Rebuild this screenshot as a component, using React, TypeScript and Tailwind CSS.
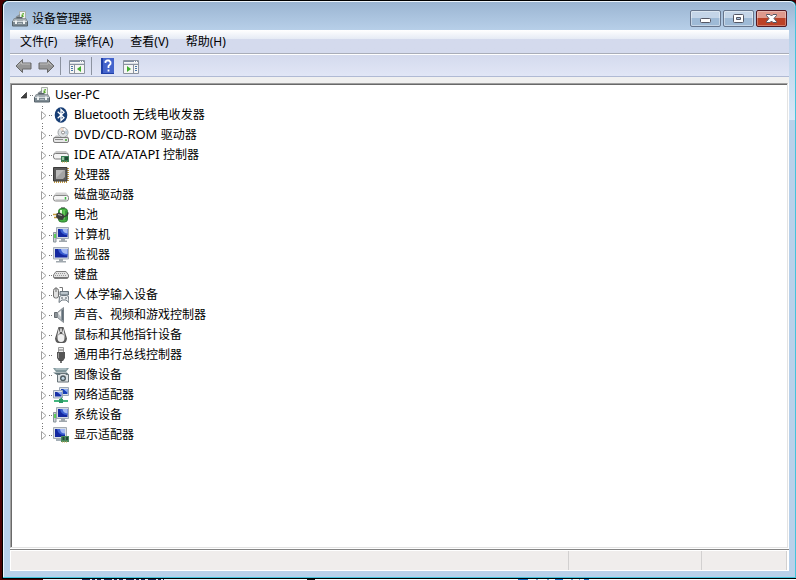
import type { ReactNode } from 'react';

type IDevice = {
  code?: string;
  name: string;
  icon: ReactNode;
};

type IIconProps = {
  children: ReactNode;
};

const Icon = (props: IIconProps) => (
  <svg className="size-4 shrink-0" viewBox="0 0 16 16" aria-hidden="true">
    {props.children}
  </svg>
);

const ManagerIcon = () => (
  <Icon>
    <path d="M7.500 .5h6v8h-6z" fill="#f1f4f1" stroke="#a9afa9" />
    <path d="M9.500 6V4q0-2 2.500-2v4z" fill="#5aa832" />
    <path d="M10.500 3.500h1v2" stroke="#c9e9ae" fill="none" />
    <path d="M3 8l1-2.500L8 3v5z" fill="#8b9398" />
    <path d="M4.500 6h6v2h-6z" fill="#59636a" />
    <path d="M2 7.500h12l1.500 3H.5z" fill="#a5adb2" stroke="#727c83" strokeWidth=".6" />
    <path d="M.5 10.500h15V15H.5z" fill="#7e8b93" stroke="#56626a" />
    <path d="M1 10.500h14" stroke="#d3dadd" />
    <path d="M3 9.500h2V13H3zM11 9.500h2V13h-2z" fill="#eff2f3" />
    <path d="M6 12.500h4" stroke="#b5bec3" />
  </Icon>
);

const BluetoothIcon = () => (
  <Icon>
    <ellipse cx="8" cy="8" rx="6.300" ry="7.800" fill="#173e75" />
    <path d="M4.700 4.700l6.300 6-3 2.800v-11l3 2.800-6.300 6" fill="none" stroke="#fff" strokeWidth="1.300" />
  </Icon>
);

const DiscIcon = () => (
  <Icon>
    <circle cx="10" cy="5.500" r="5" fill="#dfe2e4" stroke="#9fa3a6" />
    <path d="M10 5.500L7 1.500l3-.8z" fill="#f6dccb" />
    <path d="M10 5.500l4.500-2v4z" fill="#b9c9d6" />
    <path d="M10 5.500l1-4.500 2 1z" fill="#fff" />
    <circle cx="10" cy="5.500" r="1.500" fill="#fff" stroke="#8b8b8b" />
    <path d="M3 8.500h2l2 1.500h6l1-1.500 2 2.500H0z" fill="#c4c4c4" />
    <rect x=".5" y="10.500" width="15" height="5" rx="1.500" fill="#e6e6e6" stroke="#7c7c7c" />
    <path d="M2 12.500h8" stroke="#8b8b8b" />
    <path d="M12 13h2" stroke="#45a035" strokeWidth="1.500" />
  </Icon>
);

const ControllerIcon = () => (
  <Icon>
    <path d="M3 4h10l3 3H0z" fill="#c9c9c9" />
    <rect x=".5" y="6.500" width="15" height="5.500" rx="2" fill="#f4f4f4" stroke="#7d7d7d" />
    <path d="M8 9h8v6H8z" fill="#3a7d55" />
    <path d="M9 10h2v3H9z" fill="#98c3a2" />
    <path d="M12 10h3v3h-3z" fill="#1f4a34" />
    <path d="M9 15h6" stroke="#c9a53c" strokeDasharray="1 1" />
  </Icon>
);

const ProcessorIcon = () => (
  <Icon>
    <path d="M1 15h14M15 1v14" stroke="#c39a3f" strokeWidth="2" strokeDasharray="1 1" />
    <path d="M.5 .5h13.500V14H.5z" fill="#5a5a5a" stroke="#3b3b3b" />
    <path d="M3 3h9v7l-2 2H3z" fill="#a4a4a4" />
    <path d="M3 3h8l-8 8z" fill="#bcbcbc" />
  </Icon>
);

const DiskIcon = () => (
  <Icon>
    <path d="M3 5.500h10l3 4H0z" fill="#d4d4d4" />
    <rect x=".5" y="8.500" width="15" height="5.500" rx="2" fill="#f6f6f6" stroke="#868686" />
    <path d="M2.500 13h11" stroke="#b5b5b5" />
    <path d="M12.500 10v2.500" stroke="#39b642" strokeWidth="1.500" />
  </Icon>
);

const BatteryIcon = () => (
  <Icon>
    <path d="M8 0h4v2H8z" fill="#8a8f8a" />
    <rect x="5.500" y="1.500" width="9" height="13.500" rx="3" fill="#46b143" stroke="#2c7c31" />
    <path d="M8 3v5" stroke="#e3fbd9" strokeWidth="2" />
    <path d="M11 3v9" stroke="#7ed36c" />
    <path d="M13 4v9" stroke="#247a2d" />
    <path d="M0 7.500h5M1 10.500h4" stroke="#c79d3e" strokeWidth="1.300" />
    <path d="M3.500 6.500l3-1 4 2 1 2.500-2 3-4-.5-2.500-2.500z" fill="#3d3d3d" />
    <path d="M5 7.500l4 1" stroke="#b0b0b0" />
    <path d="M10.500 9.500q4 0 4.500-4" fill="none" stroke="#3a3a3a" strokeWidth="1.500" />
  </Icon>
);

const ComputerIcon = () => (
  <Icon>
    <path d="M3.500 .5h12v11h-12z" fill="#d4dae1" stroke="#a1a9b4" />
    <path d="M5 2h9.500v8H5z" fill="#1428a0" />
    <path d="M7 2h7.500v6Q8 8 7 2z" fill="#3b5fd2" />
    <path d="M9.500 2h5v4.500Q10 6 9.500 2z" fill="#a3b9f3" />
    <path d="M8 12h4v1.500h2v1.500H6v-1.500h2z" fill="#a0a8ae" />
    <path d="M.5 5.500h2.500v9.500H.5z" fill="#ccd2d5" stroke="#89949b" />
    <path d="M2 7v4" stroke="#3ed536" strokeWidth="1.500" />
  </Icon>
);

const ScreenIcon = () => (
  <Icon>
    <path d="M.5 .5h15v11.500H.5z" fill="#d5dce4" stroke="#a7afb9" />
    <path d="M2 2h12.500v8.500H2z" fill="#1428a0" />
    <path d="M5 2h9.500v6.500Q6 8.500 5 2z" fill="#3b5fd2" />
    <path d="M8 2h6.500v5Q8.500 7 8 2z" fill="#a3b9f3" />
    <path d="M6 12h4v2h3v1.500H3V14h3z" fill="#a0a8ae" />
  </Icon>
);

const KeyboardIcon = () => (
  <Icon>
    <path d="M3 4.500h10l2.500 3.500v2l-1 1.500h-13L.5 10V8z" fill="#e4e4e4" stroke="#808080" />
    <path d="M3 6.500h10M2 8.500h12" stroke="#999" strokeDasharray="1 1" />
    <path d="M1 10.500h14" stroke="#777" />
  </Icon>
);

const InputIcon = () => (
  <Icon>
    <path d="M3 3V0" stroke="#777" />
    <rect x=".5" y="1.500" width="5" height="9.500" rx="2" fill="#e0e0e0" stroke="#6f6f6f" />
    <path d="M3 2v3" stroke="#6f6f6f" />
    <path d="M6.500 .5h3v5" fill="none" stroke="#777" />
    <path d="M7 4.500h8.500V8H7z" fill="#a9b5bd" stroke="#68747c" />
    <path d="M8.500 6h6" stroke="#f3f5f6" strokeDasharray="1 1" />
    <path d="M6 15.500l.5-6L8.500 8.500h5l2 1 .5 6-3-2.500h-4z" fill="#e9ecee" stroke="#6c777f" />
    <path d="M8 11h2M13 10v2" stroke="#535d65" />
  </Icon>
);

const SpeakerIcon = () => (
  <Icon>
    <path d="M1.500 5.500h3v5h-3z" fill="#8b9297" stroke="#656b70" />
    <path d="M4.500 5.500l6-5v15l-6-5z" fill="#bcc2c6" stroke="#858b90" />
    <path d="M9.500 2.500v11" stroke="#5f6c76" strokeWidth="2" />
    <path d="M5 6l3-2v6z" fill="#f2f2f2" />
  </Icon>
);

const MouseIcon = () => (
  <Icon>
    <path d="M5.500 0h5l1.500 5 2 6.500q-.5 4-3 4.500H5q-2.500-.5-3-4.500L4 5z" fill="#5a5a5a" />
    <path d="M5.500 1.500L7 6l-2 2-1.500 4L5 5zM10.500 1.500L9 6l2 2 1.500 4L11 5z" fill="#e2e2e2" />
    <ellipse cx="8" cy="11" rx="3.500" ry="4" fill="#efefef" />
    <path d="M8 1.500V5" stroke="#f0f0f0" strokeWidth="1.500" />
  </Icon>
);

const UsbIcon = () => (
  <Icon>
    <path d="M5.500 .5h5v5h-5z" fill="#eee" stroke="#999" />
    <path d="M7 2v2M9 2v2" stroke="#777" />
    <path d="M4 5h8v6l-2 3H6l-2-3z" fill="#555" />
    <path d="M5.500 6v5" stroke="#999" />
    <path d="M8 13v3" stroke="#444" strokeWidth="1.500" />
  </Icon>
);

const ImagingIcon = () => (
  <Icon>
    <path d="M0 1h16l-3 4H3z" fill="#82989d" />
    <path d="M2.500 2h11" stroke="#d0dde0" />
    <path d="M0 5.500h14L16 8H4z" fill="#5c7278" />
    <path d="M5 7.500h2l1-1h4l1 1h2.500V15h-11V7.500z" fill="#dde2e4" stroke="#687378" />
    <circle cx="10" cy="11.300" r="3" fill="#4f5c62" />
    <circle cx="10" cy="11.300" r="1.500" fill="#c2d7e3" />
  </Icon>
);

const NetworkIcon = () => (
  <Icon>
    <path d="M6.500 .5h9v8h-9z" fill="#dce1e8" stroke="#9aa7b6" />
    <path d="M8 2h6.500v5H8z" fill="#183eb6" />
    <path d="M10 2h4.500v3.500z" fill="#8eaef4" />
    <path d="M.5 3.500h9V11h-9z" fill="#dce1e8" stroke="#9aa7b6" />
    <path d="M2 5h6.500v4.500H2z" fill="#1730a6" />
    <path d="M4 5h4.500v3.500z" fill="#8eaef4" />
    <path d="M1 14h14" stroke="#42b47e" strokeWidth="2" />
    <path d="M6 12h4v4H6zM7.500 10.500h1.500V13H7.500z" fill="#2d9c66" />
  </Icon>
);

const DisplayIcon = () => (
  <Icon>
    <path d="M.5 .5h13v11H.5z" fill="#d9dfe5" stroke="#a4abb2" />
    <path d="M2 2h10v8H2z" fill="#1428a0" />
    <path d="M4 2h8v6Q5 8 4 2z" fill="#3b5fd2" />
    <path d="M7 2h5v4.500Q7.500 6.500 7 2z" fill="#a3b9f3" />
    <path d="M3 12h5v2H3z" fill="#a5afb7" />
    <path d="M8 9h8v6H8z" fill="#4a8a5e" />
    <path d="M9.500 10h2v3h-2zM13 10h2v3h-2z" fill="#23483a" />
    <path d="M9 15h6" stroke="#caad52" strokeDasharray="1 1" />
  </Icon>
);

const devices: IDevice[] = [
  { name: 'Bluetooth 无线电收发器', icon: <BluetoothIcon /> },
  { code: 'DVD/CD-ROM', name: '驱动器', icon: <DiscIcon /> },
  { code: 'IDE ATA/ATAPI', name: '控制器', icon: <ControllerIcon /> },
  { name: '处理器', icon: <ProcessorIcon /> },
  { name: '磁盘驱动器', icon: <DiskIcon /> },
  { name: '电池', icon: <BatteryIcon /> },
  { name: '计算机', icon: <ComputerIcon /> },
  { name: '监视器', icon: <ScreenIcon /> },
  { name: '键盘', icon: <KeyboardIcon /> },
  { name: '人体学输入设备', icon: <InputIcon /> },
  { name: '声音、视频和游戏控制器', icon: <SpeakerIcon /> },
  { name: '鼠标和其他指针设备', icon: <MouseIcon /> },
  { name: '通用串行总线控制器', icon: <UsbIcon /> },
  { name: '图像设备', icon: <ImagingIcon /> },
  { name: '网络适配器', icon: <NetworkIcon /> },
  { name: '系统设备', icon: <ComputerIcon /> },
  { name: '显示适配器', icon: <DisplayIcon /> },
];

const menus = ['文件(F)', '操作(A)', '查看(V)', '帮助(H)'];

const ArrowIcon = (props: { forward?: boolean }) => (
  <svg className="h-4 w-[17px]" viewBox="0 0 17 16" aria-hidden="true">
    <path
      d={
        props.forward
          ? 'M16 8L9.500 1.500V5H1v6h8.500v3.500z'
          : 'M1 8l6.500-6.500V5H16v6H7.500v3.500z'
      }
      fill="#969696"
      stroke="#686868"
    />
    <path d={props.forward ? 'M2 6h8V4l3.500 3.500' : 'M15 6H6.500V4L3 7.500'} fill="none" stroke="#bdbdbd" />
  </svg>
);

const PaneIcon = (props: { right?: boolean }) => (
  <svg className="h-[14px] w-4" viewBox="0 0 16 14" aria-hidden="true">
    <path d="M.5 .5h15v13H.5z" fill="#f6f6f4" stroke="#8b929e" />
    <path d="M1 1.500h14" stroke="#7f8da3" />
    <path d="M11 1.500h1M13 1.500h1" stroke="#fff" />
    <path d="M1 3.500h14" stroke="#d9dee6" />
    <path d="M1 4.500h14" stroke="#8b929e" />
    {props.right ? (
      <>
        <path d="M10.500 5v8" stroke="#8b929e" />
        <path d="M12 6.500h2M12 8.500h2M12 10.500h2" stroke="#4875a8" />
        <path d="M4 6v6l4-3z" fill="#3fae2e" />
      </>
    ) : (
      <>
        <path d="M5.500 5v8" stroke="#8b929e" />
        <path d="M2 6.500h2M2 8.500h2M2 10.500h2" stroke="#4875a8" />
        <path d="M12 6v6L8 9z" fill="#3fae2e" />
      </>
    )}
  </svg>
);

const HelpIcon = () => (
  <svg className="h-4 w-[13px]" viewBox="0 0 13 16" aria-hidden="true">
    <path d="M0 0h13v16H0z" fill="#2040a8" />
    <path d="M2 0h11v15H2z" fill="#4464cc" />
    <path d="M4.500 5V3.500L6 2.500h2l1.500 1.500v2L7.500 8v2M7.500 11.500v2" fill="none" stroke="#fff" strokeWidth="1.800" />
  </svg>
);

const TitleBar = () => (
  <header className="flex h-7 shrink-0 items-center justify-between pr-2 pl-2">
    <div className="flex items-center gap-1 pt-1.5">
      <ManagerIcon />
      <h1>设备管理器</h1>
    </div>
    <div className="flex gap-0.5 pt-1">
      <button
        type="button"
        aria-label="最小化"
        className="flex h-[17px] w-[31px] items-center justify-center rounded-xs border border-[#66758c] bg-linear-to-b from-[#c4d5e8] from-50% to-[#9ebad6] to-50% pt-1 inset-ring inset-ring-white/40"
      >
        <svg className="h-[5px] w-[11px]" viewBox="0 0 11 5" aria-hidden="true">
          <rect x=".5" y=".5" width="10" height="4" rx="1" fill="#fff" stroke="#545764" />
        </svg>
      </button>
      <button
        type="button"
        aria-label="最大化"
        className="flex h-[17px] w-[31px] items-center justify-center rounded-xs border border-[#66758c] bg-linear-to-b from-[#c4d5e8] from-50% to-[#9ebad6] to-50% inset-ring inset-ring-white/40"
      >
        <svg className="h-[9px] w-[11px]" viewBox="0 0 11 9" aria-hidden="true">
          <rect x=".5" y=".5" width="10" height="8" rx="1" fill="#fff" stroke="#545764" />
          <path d="M3.500 3.500h4v2h-4z" fill="#a9c2df" stroke="#545764" />
        </svg>
      </button>
      <button
        type="button"
        aria-label="关闭"
        className="flex h-[17px] w-[31px] items-center justify-center rounded-xs border border-[#541a24] bg-linear-to-b from-[#df9a8d] from-50% to-[#bc4227] to-50% inset-ring inset-ring-white/30"
      >
        <svg className="h-[9px] w-[11px]" viewBox="0 0 11 9" aria-hidden="true">
          <path d="M.5 .5h3.500l1.500 1.500L7 .5h3.500v1L8 4.500l2.500 3v1H7L5.500 7 4 8.500H.5v-1l2.500-3-2.500-3z" fill="#fff" stroke="#545764" />
        </svg>
      </button>
    </div>
  </header>
);

const MenuBar = () => (
  <nav className="flex h-6 shrink-0 items-center gap-[17px] border-b border-[#a9adb8] bg-linear-to-b from-white from-0% via-[#e6ebf5] via-38% to-[#d4daed] to-40% pl-2.5">
    {menus.map((menu) => (
      <button key={menu} type="button">
        {menu}
      </button>
    ))}
  </nav>
);

const Toolbar = () => (
  <div className="flex h-[23px] shrink-0 items-center border-t border-b border-t-white border-b-[#b0bad4] bg-linear-to-b from-[#d4daed] to-[#e1e6f6] pl-[5px]">
    <div className="flex items-center gap-1.5">
      <button type="button" aria-label="后退">
        <ArrowIcon />
      </button>
      <button type="button" aria-label="前进">
        <ArrowIcon forward />
      </button>
    </div>
    <div className="mr-2 ml-[5px] h-[18px] border-l border-[#8c93a0]" />
    <button type="button" aria-label="显示控制台树" className="pt-0.5">
      <PaneIcon />
    </button>
    <div className="mr-[9px] ml-1.5 h-[18px] border-l border-[#8c93a0]" />
    <button type="button" aria-label="帮助">
      <HelpIcon />
    </button>
    <button type="button" aria-label="显示操作窗格" className="ml-[9px] pt-0.5">
      <PaneIcon right />
    </button>
  </div>
);

const DeviceRow = (props: IDevice) => (
  <li role="treeitem" aria-expanded="false" className="group flex h-5 items-center">
    <button type="button" aria-label={`展开 ${props.name}`} className="shrink-0">
      <svg className="h-5 w-[13px]" viewBox="0 0 13 20" aria-hidden="true">
        <path d="M2 1.500h1M2 3.500h1" stroke="#777" />
        <path d="M2 18.500h1" stroke="#777" className="group-last:hidden" />
        <path d="M1.500 6.500v8l4.500-4z" fill="#fff" stroke="#a0a0a0" />
        <path d="M9 10.500h1M11 10.500h1" stroke="#777" />
      </svg>
    </button>
    {props.icon}
    <span className="ml-[5px] whitespace-nowrap">
      {props.code && <span className="text-[13px]">{props.code} </span>}
      {props.name}
    </span>
  </li>
);

const DeviceTree = () => (
  <main className="mr-px min-h-0 flex-1 overflow-hidden border border-t-[#a0a0a0] border-r-[#e3e3e3] border-b-[#e3e3e3] border-l-[#a0a0a0] bg-white pt-px pl-px shadow-[inset_1px_1px_0_#696969]">
    <ul role="tree">
      <li role="treeitem" aria-expanded="true">
        <div className="flex h-5 items-center pl-2">
          <button type="button" aria-label="折叠 User-PC" className="shrink-0">
            <svg className="h-5 w-[14px]" viewBox="0 0 14 20" aria-hidden="true">
              <path d="M6.500 7.500v5.500H1z" fill="#404040" stroke="#262626" strokeWidth=".7" />
              <path d="M10 10.500h1M12 10.500h1" stroke="#777" />
            </svg>
          </button>
          <ManagerIcon />
          <span className="ml-[5px]">User-PC</span>
        </div>
        <ul role="group" className="pl-7">
          {devices.map((device) => (
            <DeviceRow key={device.name} {...device} />
          ))}
        </ul>
      </li>
    </ul>
  </main>
);

const StatusBar = () => (
  <footer className="mt-px flex h-[22px] shrink-0 border-t border-[#858585] bg-white py-px pl-px">
    <div className="flex-1 border-r border-[#d2d0d0] bg-[#f0edec]" />
    <div className="w-[133px] border-r border-[#d2d0d0] bg-[#f0edec]" />
    <div className="mr-0.5 w-[85px] border-r border-[#d2d0d0] bg-[#f0edec]" />
  </footer>
);

const FrameSide = () => (
  <div className="w-1.5 shrink-0">
    <div className="h-[90px] bg-linear-to-b from-[#b7cfe8] to-[#d9e7f6]" />
  </div>
);

const DesktopEdge = () => (
  <svg className="h-px w-full shrink-0 bg-white" aria-hidden="true">
    <path d="M0 .5h41" stroke="#4b0000" />
    <path d="M41 .5h206" stroke="#eef0f8" />
    <path d="M80 .5h82" stroke="#1c2350" strokeDasharray="8 2 3 2 4 3" />
    <path d="M305 .5h8" stroke="#111" />
    <path d="M516 .5h10M553 .5h8M582 .5h5" stroke="#1467bd" />
    <path d="M534 .5h2M545 .5h2M569 .5h2M577 .5h1" stroke="#6c9fd0" />
  </svg>
);

const App = () => (
  <div className="flex h-screen flex-col bg-[#4b0000] pl-0.5 font-['Noto_Sans','Noto_Sans_CJK_SC',sans-serif] text-xs text-black">
    <div className="flex min-h-0 flex-1 flex-col rounded-t-md border-t border-b border-l border-black bg-[#43c4dc] pr-px pb-px">
      <div className="flex min-h-0 flex-1 flex-col rounded-t-md border-t border-l border-[#edf5fc] bg-[#b9d1ea] bg-linear-to-b from-[#9bb5d2] to-[#b9d1ea] to-[30px] pb-1.5">
        <TitleBar />
        <div className="flex min-h-0 flex-1">
          <FrameSide />
          <div className="flex min-h-0 min-w-0 flex-1 flex-col bg-white">
            <MenuBar />
            <Toolbar />
            <div className="h-1.5 shrink-0 bg-[#f0f0f0]" />
            <DeviceTree />
            <StatusBar />
          </div>
          <FrameSide />
        </div>
      </div>
    </div>
    <DesktopEdge />
  </div>
);

export default App;
